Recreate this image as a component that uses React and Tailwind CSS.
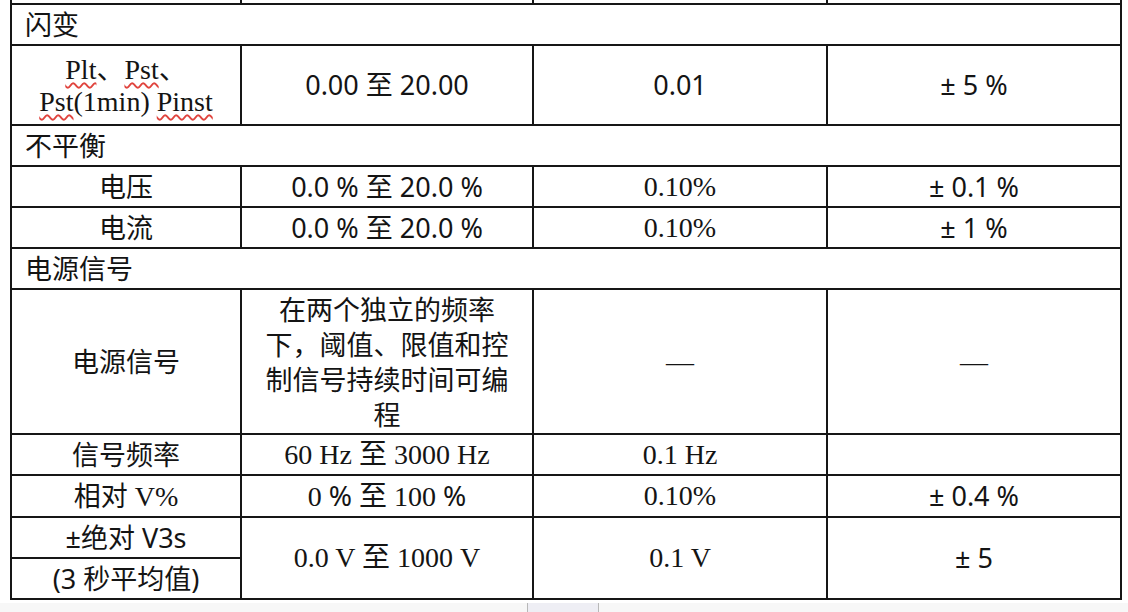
const serif = "font-['Liberation_Serif','Noto_Sans_CJK_SC',serif] text-[28px]";
const sans = "font-['Noto_Sans','Noto_Sans_CJK_SC',sans-serif]";
const cell = "border-2 border-[#161616] p-0 text-center align-middle";
const wavy = "underline decoration-wavy decoration-[#e0443e] decoration-[1.5px] underline-offset-[3px]";

function Section({ title }) {
  return (
    <tr className="h-[41px]">
      <td colSpan={4} className={`${cell} text-left pl-[13px] ${sans}`}>
        {title}
      </td>
    </tr>
  );
}

export default function App() {
  return (
    <div className="w-[1128px] h-[612px] bg-white overflow-hidden text-[27px] leading-[36px] text-[#141414]">
      <table className="ml-[10px] w-[1110px] table-fixed border-collapse">
        <colgroup>
          <col className="w-[230px]" />
          <col className="w-[292px]" />
          <col className="w-[294px]" />
          <col className="w-[294px]" />
        </colgroup>
        <tbody>
          <tr className="h-[4px]">
            <td className={`${cell} border-t-0`} />
            <td className={`${cell} border-t-0`} />
            <td className={`${cell} border-t-0`} />
            <td className={`${cell} border-t-0`} />
          </tr>
          <Section title="闪变" />
          <tr className="h-[80px]">
            <td className={`${cell} ${serif} leading-[32px]`}>
              <div>
                <span className={wavy}>Plt</span>
                <span className={sans}>、</span>
                <span className={wavy}>Pst</span>
                <span className={sans}>、</span>
              </div>
              <div>
                <span className={wavy}>Pst</span>(1min) <span className={wavy}>Pinst</span>
              </div>
            </td>
            <td className={`${cell} ${sans}`}>0.00 至 20.00</td>
            <td className={`${cell} ${sans}`}>0.01</td>
            <td className={`${cell} ${sans}`}>± 5 %</td>
          </tr>
          <Section title="不平衡" />
          <tr className="h-[41px]">
            <td className={`${cell} ${sans}`}>电压</td>
            <td className={`${cell} ${sans}`}>0.0 % 至 20.0 %</td>
            <td className={`${cell} ${serif}`}>0.10%</td>
            <td className={`${cell} ${sans}`}>± 0.1 %</td>
          </tr>
          <tr className="h-[41px]">
            <td className={`${cell} ${sans}`}>电流</td>
            <td className={`${cell} ${sans}`}>0.0 % 至 20.0 %</td>
            <td className={`${cell} ${serif}`}>0.10%</td>
            <td className={`${cell} ${sans}`}>± 1 %</td>
          </tr>
          <Section title="电源信号" />
          <tr className="h-[145px]">
            <td className={`${cell} ${sans}`}>电源信号</td>
            <td className={`${cell} ${sans} px-[20px] leading-[35px]`}>
              在两个独立的频率下，阈值、限值和控制信号持续时间可编程
            </td>
            <td className={`${cell} ${serif}`}>—</td>
            <td className={`${cell} ${serif}`}>—</td>
          </tr>
          <tr className="h-[41px]">
            <td className={`${cell} ${sans}`}>信号频率</td>
            <td className={`${cell} ${serif}`}>60 Hz 至 3000 Hz</td>
            <td className={`${cell} ${serif}`}>0.1 Hz</td>
            <td className={cell} />
          </tr>
          <tr className="h-[42px]">
            <td className={`${cell} ${sans}`}>
              相对 <span className={serif}>V%</span>
            </td>
            <td className={`${cell} ${serif}`}>
              0 <span className={sans}>%</span> 至 100 <span className={sans}>%</span>
            </td>
            <td className={`${cell} ${serif}`}>0.10%</td>
            <td className={`${cell} ${sans}`}>± 0.4 %</td>
          </tr>
          <tr className="h-[41px]">
            <td className={`${cell} ${sans}`}>±绝对 V3s</td>
            <td rowSpan={2} className={`${cell} ${serif}`}>
              0.0 V 至 1000 V
            </td>
            <td rowSpan={2} className={`${cell} ${serif}`}>
              0.1 V
            </td>
            <td rowSpan={2} className={`${cell} ${sans}`}>
              ± 5
            </td>
          </tr>
          <tr className="h-[41px]">
            <td className={`${cell} ${sans}`}>(3 秒平均值)</td>
          </tr>
        </tbody>
      </table>
      <div className="mt-[3px] h-[12px] flex bg-[#f7f7f7]">
        <div className="ml-[527px] w-[72px] border-x border-[#b8b8b8] bg-[#eeeef4]" />
      </div>
    </div>
  );
}
